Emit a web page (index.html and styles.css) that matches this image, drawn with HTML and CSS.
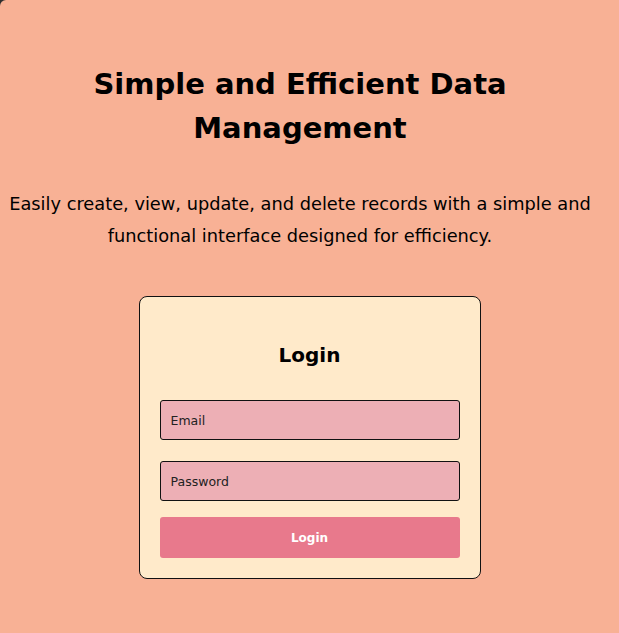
FILE: index.html
```html
<!DOCTYPE html>
<html lang="en">
<head>
<meta charset="utf-8">
<title>Simple and Efficient Data Management</title>
<link rel="stylesheet" href="styles.css">
</head>
<body>
  <main class="page">
    <section class="hero">
      <h1 class="hero-title">Simple and Efficient Data Management</h1>
      <p class="hero-text">Easily create, view, update, and delete records with a simple and functional interface designed for efficiency.</p>
    </section>
    <form class="login-card">
      <h2 class="login-title">Login</h2>
      <input class="field" type="email" placeholder="Email">
      <input class="field field-password" type="password" placeholder="Password">
      <button class="login-button" type="button">Login</button>
    </form>
  </main>
</body>
</html>
```
FILE: styles.css
```css
html {
  background: #2e2e2e;
  height: 100%;
}
body {
  margin: 0;
  min-height: 100%;
  background: #f8b195;
  border-top-left-radius: 6px;
  font-family: "Comic Sans MS", "DejaVu Sans", sans-serif;
  color: #000;
}
.page {
  display: flex;
  flex-direction: column;
  padding-top: 62px;
  padding-bottom: 40px;
}
.hero {
  width: 600px;
  text-align: center;
}
.hero-title {
  margin: 0 auto;
  width: 440px;
  font-size: 29px;
  line-height: 44px;
  font-weight: bold;
}
.hero-text {
  margin: 38px 0 0;
  font-size: 17.8px;
  line-height: 32px;
}
.login-card {
  align-self: center;
  margin-top: 44px;
  width: 300px;
  padding: 20px;
  border: 1px solid #111;
  border-radius: 8px;
  background: #ffeaca;
  display: flex;
  flex-direction: column;
}
.login-title {
  margin: 23px 0 30px;
  text-align: center;
  font-size: 20px;
  line-height: 30px;
  font-weight: bold;
}
.field {
  box-sizing: border-box;
  height: 40px;
  width: 100%;
  margin: 0;
  padding: 0 10px;
  border: 1px solid #111;
  border-radius: 3px;
  background: #edafb5;
  font-family: inherit;
  font-size: 12.5px;
  color: #222;
}
.field::placeholder {
  color: #222;
  opacity: 1;
}
.field-password {
  margin-top: 21px;
}
.login-button {
  box-sizing: border-box;
  margin-top: 16px;
  height: 41px;
  width: 100%;
  border: none;
  border-radius: 3px;
  background: #e8798c;
  color: #fff;
  font-family: inherit;
  font-size: 12px;
  font-weight: bold;
}
```
